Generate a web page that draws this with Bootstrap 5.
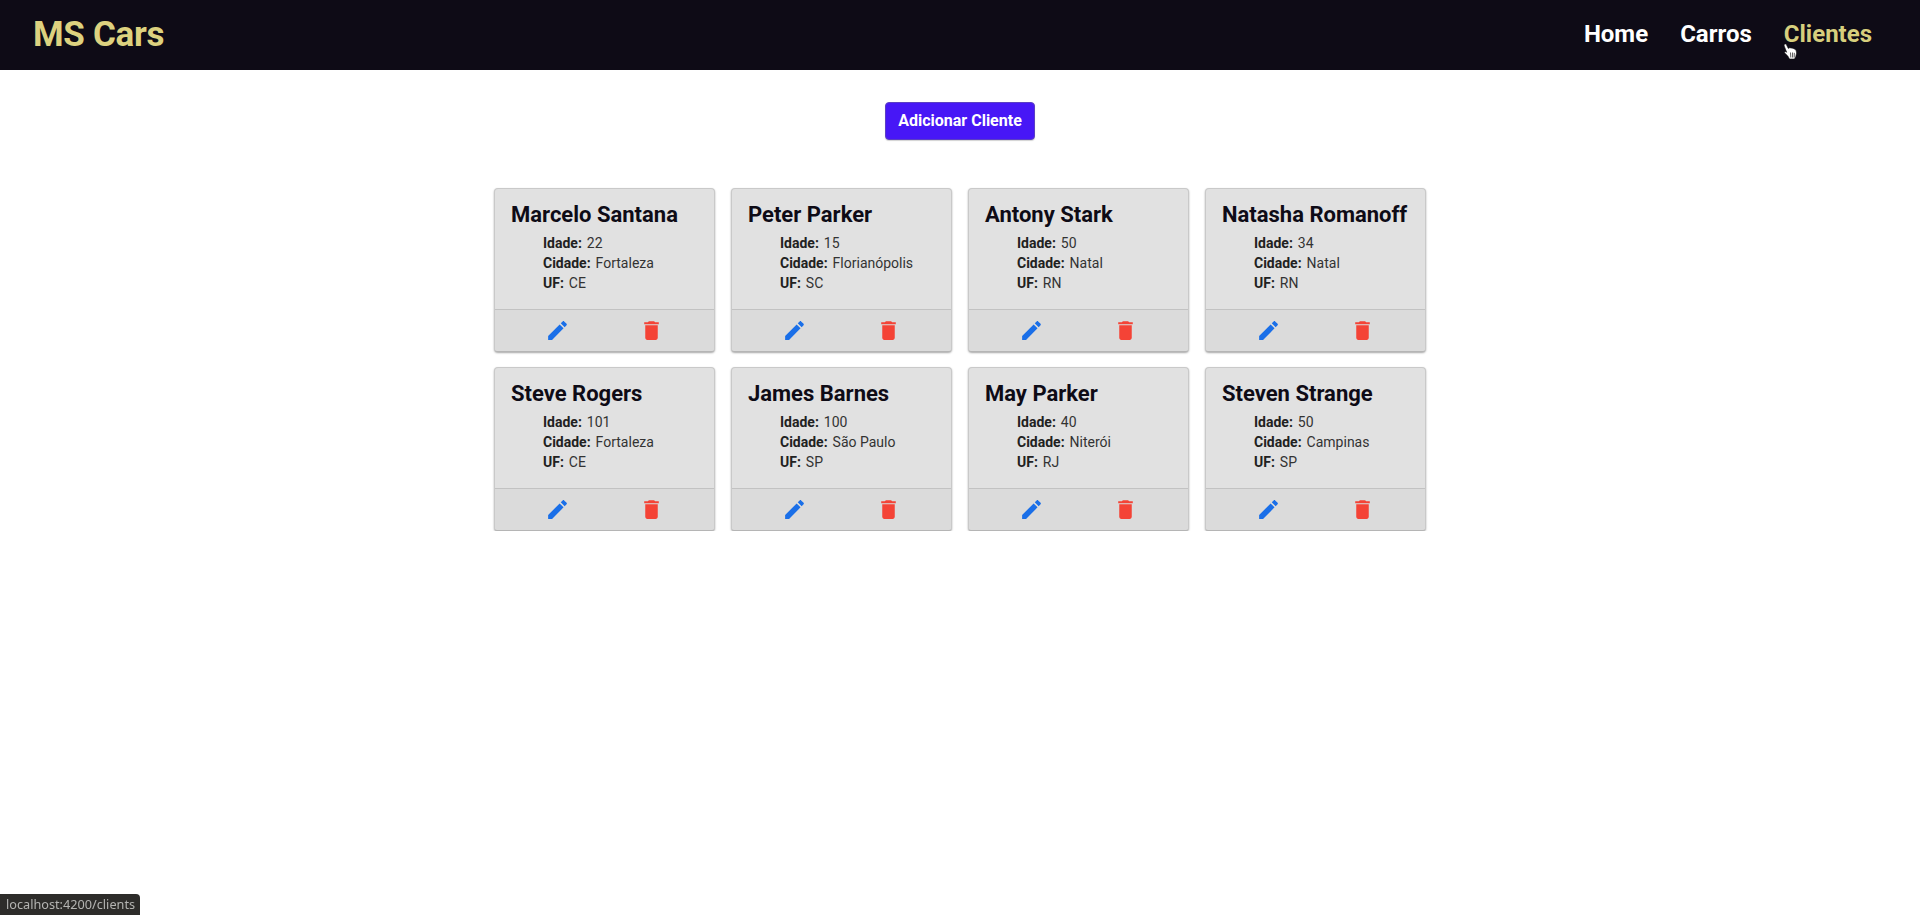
<!DOCTYPE html>
<html lang="pt-BR">
<head>
<meta charset="utf-8">
<title>MS Cars</title>
<link href="https://cdn.jsdelivr.net/npm/bootstrap@5.3.0/dist/css/bootstrap.min.css" rel="stylesheet">
<style>
body { font-family: Roboto, sans-serif; background: #fff; color: #333; font-size: 14px; }
.ms-bar { background: #0e0b16; height: 70px; padding: 0 48px 2px 33px; }
.ms-logo { font-family: Roboto, sans-serif; font-weight: 700; font-size: 35px; letter-spacing: -.3px; color: #ddd27f; text-decoration: none; line-height: 1; }
.ms-links { gap: 32px; }
.ms-link { color: #fff; font-weight: 700; font-size: 24px; text-decoration: none; line-height: 1; }
.ms-link.is-active { color: #d7cf7d; }
.ms-add { background: #4717f6; border: 1px solid #5b3fc4; color: #fff; font-weight: 700; font-size: 16px; width: 150px; height: 38px; padding: 0; border-radius: 4px; margin-top: 32px; box-shadow: 0 1px 1px rgba(0,0,0,.18); }
.ms-add:hover { background: #4717f6; color: #fff; }
.ms-grid { display: grid; grid-template-columns: repeat(4, 221px); gap: 15px 16px; width: 932px; margin: 48px auto 0; }
.ms-card { background: #e1e1e1; border: 1px solid #c9c9c9; border-bottom-color: #b5b5b5; border-radius: 4px; box-shadow: 0 1px 2px rgba(0,0,0,.35); height: 164px; overflow: hidden; }
.ms-card .card-body { padding: 12px 16px 0; }
.ms-name { font-family: Roboto, sans-serif; font-weight: 700; font-size: 22px; line-height: 28px; color: #0e0b16; margin: 0 0 4px; white-space: nowrap; }
.ms-info { list-style: none; padding: 0 0 0 32px; margin: 0; line-height: 20px; font-size: 14px; }
.ms-info b { font-weight: 700; margin-right: 1.500px; color: #212121; }
.ms-foot { background: #dbdbdb; border-top: 1px solid #c2c2c2; height: 42px; flex: none; padding: 0 16px 1px; }
.ms-icon { width: 25px; height: 25px; display: block; }
.ms-status { position: fixed; left: 0; bottom: 0; background: #2d2c2a; color: #b4b4b2; font-family: "Noto Sans", sans-serif; font-size: 12.700px; line-height: 21px; height: 21px; padding: 0 5px 0 6px; border-top-right-radius: 4px; }
.ms-cursor { position: absolute; left: 1783px; top: 43px; width: 15px; height: 17px; }
</style>
</head>
<body>
<nav class="ms-bar d-flex align-items-center justify-content-between">
  <a class="ms-logo" href="#">MS Cars</a>
  <div class="ms-links d-flex align-items-center">
    <a class="ms-link" href="#">Home</a>
    <a class="ms-link" href="#">Carros</a>
    <a class="ms-link is-active" href="#">Clientes</a>
  </div>
</nav>
<svg class="ms-cursor" viewBox="0 0 15 17"><path d="M1.500 1.200 C2.500 .6 3.300 1.200 3.700 2.200 L5.300 5.400 L6.600 4.800 L8 4.900 L9.500 5.200 L11 5.700 L13 7 L13.600 10 L12.800 13.500 L11.500 16 L6.500 16 L4.800 13 L1.500 9.800 C1.300 9 2.200 8.400 3.200 8.900 L3.700 9.300 L1.200 3 C1 2.200 1 1.600 1.500 1.200 Z" fill="#fff" stroke="#111" stroke-width=".6"/><path d="M7.500 9.500 L7.800 14.500 M9.500 9.500 L9.600 14.500 M11.300 9.800 L11.200 14.500" stroke="#333" stroke-width=".8" fill="none"/></svg>
<main>
  <div class="d-flex justify-content-center">
    <button type="button" class="btn ms-add">Adicionar Cliente</button>
  </div>
  <div class="ms-grid">
    <div class="card ms-card"><div class="card-body"><h5 class="ms-name">Marcelo Santana</h5><ul class="ms-info"><li><b>Idade:</b> 22</li><li><b>Cidade:</b> Fortaleza</li><li><b>UF:</b> CE</li></ul></div><div class="ms-foot d-flex align-items-center justify-content-around"><svg class="ms-icon" viewBox="0 0 24 24" fill="#1a6fe8"><path d="M3 17.250V21h3.750L17.810 9.940l-3.750-3.750L3 17.250zM20.710 7.040c.39-.39.39-1.020 0-1.410l-2.340-2.340c-.39-.39-1.020-.39-1.410 0l-1.830 1.830 3.750 3.750 1.830-1.830z"/></svg><svg class="ms-icon" viewBox="0 0 24 24" fill="#f44336"><path d="M6 19c0 1.100.9 2 2 2h8c1.100 0 2-.9 2-2V7H6v12zM19 4h-3.500l-1-1h-5l-1 1H5v2h14V4z"/></svg></div></div>
    <div class="card ms-card"><div class="card-body"><h5 class="ms-name">Peter Parker</h5><ul class="ms-info"><li><b>Idade:</b> 15</li><li><b>Cidade:</b> Florianópolis</li><li><b>UF:</b> SC</li></ul></div><div class="ms-foot d-flex align-items-center justify-content-around"><svg class="ms-icon" viewBox="0 0 24 24" fill="#1a6fe8"><path d="M3 17.250V21h3.750L17.810 9.940l-3.750-3.750L3 17.250zM20.710 7.040c.39-.39.39-1.020 0-1.410l-2.340-2.340c-.39-.39-1.020-.39-1.410 0l-1.830 1.830 3.750 3.750 1.830-1.830z"/></svg><svg class="ms-icon" viewBox="0 0 24 24" fill="#f44336"><path d="M6 19c0 1.100.9 2 2 2h8c1.100 0 2-.9 2-2V7H6v12zM19 4h-3.500l-1-1h-5l-1 1H5v2h14V4z"/></svg></div></div>
    <div class="card ms-card"><div class="card-body"><h5 class="ms-name">Antony Stark</h5><ul class="ms-info"><li><b>Idade:</b> 50</li><li><b>Cidade:</b> Natal</li><li><b>UF:</b> RN</li></ul></div><div class="ms-foot d-flex align-items-center justify-content-around"><svg class="ms-icon" viewBox="0 0 24 24" fill="#1a6fe8"><path d="M3 17.250V21h3.750L17.810 9.940l-3.750-3.750L3 17.250zM20.710 7.040c.39-.39.39-1.020 0-1.410l-2.340-2.340c-.39-.39-1.020-.39-1.410 0l-1.830 1.830 3.750 3.750 1.830-1.830z"/></svg><svg class="ms-icon" viewBox="0 0 24 24" fill="#f44336"><path d="M6 19c0 1.100.9 2 2 2h8c1.100 0 2-.9 2-2V7H6v12zM19 4h-3.500l-1-1h-5l-1 1H5v2h14V4z"/></svg></div></div>
    <div class="card ms-card"><div class="card-body"><h5 class="ms-name">Natasha Romanoff</h5><ul class="ms-info"><li><b>Idade:</b> 34</li><li><b>Cidade:</b> Natal</li><li><b>UF:</b> RN</li></ul></div><div class="ms-foot d-flex align-items-center justify-content-around"><svg class="ms-icon" viewBox="0 0 24 24" fill="#1a6fe8"><path d="M3 17.250V21h3.750L17.810 9.940l-3.750-3.750L3 17.250zM20.710 7.040c.39-.39.39-1.020 0-1.410l-2.340-2.340c-.39-.39-1.020-.39-1.410 0l-1.830 1.830 3.750 3.750 1.830-1.830z"/></svg><svg class="ms-icon" viewBox="0 0 24 24" fill="#f44336"><path d="M6 19c0 1.100.9 2 2 2h8c1.100 0 2-.9 2-2V7H6v12zM19 4h-3.500l-1-1h-5l-1 1H5v2h14V4z"/></svg></div></div>
    <div class="card ms-card"><div class="card-body"><h5 class="ms-name">Steve Rogers</h5><ul class="ms-info"><li><b>Idade:</b> 101</li><li><b>Cidade:</b> Fortaleza</li><li><b>UF:</b> CE</li></ul></div><div class="ms-foot d-flex align-items-center justify-content-around"><svg class="ms-icon" viewBox="0 0 24 24" fill="#1a6fe8"><path d="M3 17.250V21h3.750L17.810 9.940l-3.750-3.750L3 17.250zM20.710 7.040c.39-.39.39-1.020 0-1.410l-2.340-2.340c-.39-.39-1.020-.39-1.410 0l-1.830 1.830 3.750 3.750 1.830-1.830z"/></svg><svg class="ms-icon" viewBox="0 0 24 24" fill="#f44336"><path d="M6 19c0 1.100.9 2 2 2h8c1.100 0 2-.9 2-2V7H6v12zM19 4h-3.500l-1-1h-5l-1 1H5v2h14V4z"/></svg></div></div>
    <div class="card ms-card"><div class="card-body"><h5 class="ms-name">James Barnes</h5><ul class="ms-info"><li><b>Idade:</b> 100</li><li><b>Cidade:</b> São Paulo</li><li><b>UF:</b> SP</li></ul></div><div class="ms-foot d-flex align-items-center justify-content-around"><svg class="ms-icon" viewBox="0 0 24 24" fill="#1a6fe8"><path d="M3 17.250V21h3.750L17.810 9.940l-3.750-3.750L3 17.250zM20.710 7.040c.39-.39.39-1.020 0-1.410l-2.340-2.340c-.39-.39-1.020-.39-1.410 0l-1.830 1.830 3.750 3.750 1.830-1.830z"/></svg><svg class="ms-icon" viewBox="0 0 24 24" fill="#f44336"><path d="M6 19c0 1.100.9 2 2 2h8c1.100 0 2-.9 2-2V7H6v12zM19 4h-3.500l-1-1h-5l-1 1H5v2h14V4z"/></svg></div></div>
    <div class="card ms-card"><div class="card-body"><h5 class="ms-name">May Parker</h5><ul class="ms-info"><li><b>Idade:</b> 40</li><li><b>Cidade:</b> Niterói</li><li><b>UF:</b> RJ</li></ul></div><div class="ms-foot d-flex align-items-center justify-content-around"><svg class="ms-icon" viewBox="0 0 24 24" fill="#1a6fe8"><path d="M3 17.250V21h3.750L17.810 9.940l-3.750-3.750L3 17.250zM20.710 7.040c.39-.39.39-1.020 0-1.410l-2.340-2.340c-.39-.39-1.020-.39-1.410 0l-1.830 1.830 3.750 3.750 1.830-1.830z"/></svg><svg class="ms-icon" viewBox="0 0 24 24" fill="#f44336"><path d="M6 19c0 1.100.9 2 2 2h8c1.100 0 2-.9 2-2V7H6v12zM19 4h-3.500l-1-1h-5l-1 1H5v2h14V4z"/></svg></div></div>
    <div class="card ms-card"><div class="card-body"><h5 class="ms-name">Steven Strange</h5><ul class="ms-info"><li><b>Idade:</b> 50</li><li><b>Cidade:</b> Campinas</li><li><b>UF:</b> SP</li></ul></div><div class="ms-foot d-flex align-items-center justify-content-around"><svg class="ms-icon" viewBox="0 0 24 24" fill="#1a6fe8"><path d="M3 17.250V21h3.750L17.810 9.940l-3.750-3.750L3 17.250zM20.710 7.040c.39-.39.39-1.020 0-1.410l-2.340-2.340c-.39-.39-1.020-.39-1.410 0l-1.830 1.830 3.750 3.750 1.830-1.830z"/></svg><svg class="ms-icon" viewBox="0 0 24 24" fill="#f44336"><path d="M6 19c0 1.100.9 2 2 2h8c1.100 0 2-.9 2-2V7H6v12zM19 4h-3.500l-1-1h-5l-1 1H5v2h14V4z"/></svg></div></div>
  </div>
</main>
<div class="ms-status">localhost:4200/clients</div>
<script src="https://cdn.jsdelivr.net/npm/bootstrap@5.3.0/dist/js/bootstrap.bundle.min.js"></script>
</body>
</html>
